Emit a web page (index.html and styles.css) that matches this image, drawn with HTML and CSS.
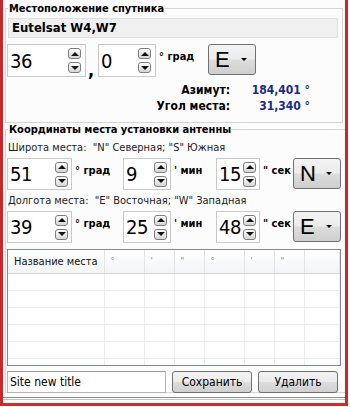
FILE: index.html
```html
<!DOCTYPE html>
<html>
<head>
    <meta charset="UTF-8">
    <title>Местоположение спутника</title>
    <link rel="stylesheet" href="styles.css">
</head>
<body>
<div class="window">
    <fieldset class="group sat">
        <legend>Местоположение спутника</legend>
        <div class="satname">Eutelsat W4,W7</div>
        <div class="row satrow">
            <div class="spin w78"><span class="val">36</span><div class="arrows"><span class="ab up"></span><span class="ab dn"></span></div></div>
            <span class="comma">,</span>
            <div class="spin w58"><span class="val">0</span><div class="arrows"><span class="ab up"></span><span class="ab dn"></span></div></div>
            <span class="unit u-grad1">° град</span>
            <div class="combo c-sat"><span class="cval">E</span><span class="caret"></span></div>
        </div>
        <div class="results">
            <span class="rlabel">Азимут:</span><span class="rval">184,401 °</span>
            <span class="rlabel">Угол места:</span><span class="rval">31,340 °</span>
        </div>
    </fieldset>

    <fieldset class="group site">
        <legend>Координаты места установки антенны</legend>
        <div class="hint">Широта места:&nbsp; "N" Северная; "S" Южная</div>
        <div class="row">
            <div class="spin w64"><span class="val">51</span><div class="arrows"><span class="ab up"></span><span class="ab dn"></span></div></div>
            <span class="unit u-grad">° град</span>
            <div class="spin w48"><span class="val">9</span><div class="arrows"><span class="ab up"></span><span class="ab dn"></span></div></div>
            <span class="unit u-min">' мин</span>
            <div class="spin w40"><span class="val">15</span><div class="arrows"><span class="ab up"></span><span class="ab dn"></span></div></div>
            <span class="unit u-sec">" сек</span>
            <div class="combo c-site"><span class="cval">N</span><span class="caret"></span></div>
        </div>
        <div class="hint">Долгота места:&nbsp; "E" Восточная; "W" Западная</div>
        <div class="row">
            <div class="spin w64"><span class="val">39</span><div class="arrows"><span class="ab up"></span><span class="ab dn"></span></div></div>
            <span class="unit u-grad">° град</span>
            <div class="spin w48"><span class="val">25</span><div class="arrows"><span class="ab up"></span><span class="ab dn"></span></div></div>
            <span class="unit u-min">' мин</span>
            <div class="spin w40"><span class="val">48</span><div class="arrows"><span class="ab up"></span><span class="ab dn"></span></div></div>
            <span class="unit u-sec">" сек</span>
            <div class="combo c-site"><span class="cval">E</span><span class="caret"></span></div>
        </div>

        <div class="listwrap">
            <table class="list">
                <tr class="head">
                    <th class="cname">Название места</th>
                    <th class="c40">°</th><th class="c30">'</th><th class="c30">"</th>
                    <th class="c40">°</th><th class="c30">'</th><th class="c30">"</th>
                    <th></th>
                </tr>
                <tr><td></td><td></td><td></td><td></td><td></td><td></td><td></td><td></td></tr>
                <tr><td></td><td></td><td></td><td></td><td></td><td></td><td></td><td></td></tr>
                <tr><td></td><td></td><td></td><td></td><td></td><td></td><td></td><td></td></tr>
                <tr><td></td><td></td><td></td><td></td><td></td><td></td><td></td><td></td></tr>
                <tr><td></td><td></td><td></td><td></td><td></td><td></td><td></td><td></td></tr>
                <tr><td></td><td></td><td></td><td></td><td></td><td></td><td></td><td></td></tr>
            </table>
        </div>

        <div class="bottom">
            <div class="edit">Site new title</div>
            <div class="btn">Сохранить</div>
            <div class="btn">Удалить</div>
        </div>
    </fieldset>
    <div class="statusline"></div>
</div>
</body>
</html>
```

FILE: styles.css
```css
* {
    margin: 0;
    padding: 0;
    box-sizing: border-box;
}

body {
    background: #fff;
    font-family: "DejaVu Sans Condensed", "DejaVu Sans", sans-serif;
    font-size: 11px;
    color: #000;
}

.window {
    width: 348px;
    height: 406px;
    background: #fcfcfc;
    border-left: 3px solid #c8282b;
    border-right: 3px solid #c8282b;
    border-bottom: 3px solid #d42a2a;
    overflow: hidden;
}

.group {
    border: 1px solid #d5d5d5;
    margin: 0 2px;
    padding: 0 4px 0 2px;
}

.group legend {
    font-weight: bold;
    line-height: 13px;
    padding: 0 1px;
}

.sat {
    margin-top: 2px;
    padding-bottom: 9px;
}

.satname {
    margin-top: 3px;
    height: 20px;
    line-height: 18px;
    padding-left: 3px;
    background: #f0f0f0;
    border: 1px solid #dedede;
    font-size: 13px;
    font-weight: bold;
}

.row {
    display: flex;
    align-items: flex-start;
    margin-top: 3px;
}

.satrow {
    margin-top: 6px;
}

/* spin box */
.spin {
    display: flex;
    align-items: center;
    justify-content: space-between;
    height: 32px;
    background: #fff;
    border: 1px solid #c9c9c9;
    padding: 0 3px 0 2px;
}

.satrow .spin {
    height: 33px;
    padding-right: 4px;
}

.w78 { width: 79px; margin-left: -1px; }
.w58 { width: 58px; }
.w64 { width: 65px; margin-left: -1px; }
.w48 { width: 48px; }
.w40 { width: 44px; }

.val {
    font-size: 20px;
    line-height: 24px;
    letter-spacing: -0.5px;
}

.arrows {
    display: flex;
    flex-direction: column;
    gap: 3px;
}

.ab {
    display: flex;
    align-items: center;
    justify-content: center;
    width: 13px;
    height: 11px;
    border: 1px solid #7e7e7e;
    border-radius: 3px;
    background: linear-gradient(#fdfdfd, #d6d6d6);
}

.ab::after {
    content: "";
    border-left: 4px solid transparent;
    border-right: 4px solid transparent;
}

.up::after {
    border-bottom: 4px solid #111;
}

.dn::after {
    border-top: 4px solid #111;
}

.comma {
    width: 12px;
    padding-left: 2px;
    font-size: 18px;
    font-weight: bold;
    line-height: 20px;
    margin-top: 16px;
}

.unit {
    font-weight: bold;
    line-height: 13px;
    margin-top: 6px;
    white-space: nowrap;
}

.u-grad1 { width: 52px; padding-left: 3px; }
.u-grad { width: 51px; padding-left: 3px; }
.u-min { width: 45px; padding-left: 3px; }
.u-sec { width: 33px; padding-left: 3px; }

/* combo */
.combo {
    display: flex;
    align-items: center;
    justify-content: space-between;
    border: 1px solid #707070;
    border-radius: 3px;
    background: linear-gradient(#f3f3f3 0%, #ebebeb 48%, #dcdcdc 52%, #cfcfcf 100%);
    padding: 0 8px 0 6px;
}

.c-sat {
    width: 48px;
    height: 31px;
}

.c-site {
    width: 48px;
    height: 31px;
}

.cval {
    font-family: "Liberation Sans", Arial, sans-serif;
    font-size: 22px;
    line-height: 24px;
}

.caret {
    border-left: 3px solid transparent;
    border-right: 3px solid transparent;
    border-top: 3px solid #000;
}

/* results */
.results {
    display: grid;
    grid-template-columns: 222px 80px;
    margin-top: 4px;
    row-gap: 3px;
    font-weight: bold;
    font-size: 12px;
    line-height: 13px;
}

.rlabel {
    text-align: right;
}

.rval {
    text-align: right;
    color: #1c2b86;
}

/* site group */
.site {
    padding-bottom: 2px;
    height: 270px;
}

.hint {
    margin-top: 4px;
    line-height: 14px;
    color: #222;
}

.site legend + .hint {
    margin-top: 5px;
}

.listwrap {
    margin-top: 6px;
    margin-left: -1px;
    height: 117px;
    border: 1px solid #828790;
    background: #fff;
    overflow: hidden;
}

.list {
    width: 100%;
    border-collapse: collapse;
    table-layout: fixed;
}

.list th {
    height: 23px;
    text-align: left;
    font-weight: normal;
    color: #8a8a8a;
    font-size: 9px;
    vertical-align: top;
    padding: 6px 0 0 6px;
    background: linear-gradient(#ffffff, #f3f4f6);
    border-right: 1px solid #e3e4e6;
    border-bottom: 1px solid #d5d5d5;
}

.list th.cname {
    width: 96px;
    font-size: 11px;
    color: #111;
    padding-top: 5px;
}

.list th.c40 { width: 40px; }
.list th.c30 { width: 30px; }

.list td {
    height: 17px;
    border-right: 1px solid #ececec;
    border-bottom: 1px solid #ececec;
}

.bottom {
    display: flex;
    gap: 6px;
    margin-top: 5px;
    margin-left: -1px;
    height: 22px;
}

.edit {
    width: 159px;
    background: #fff;
    border: 1px solid #b5b5b5;
    border-top-color: #9a9a9a;
    padding-left: 2px;
    line-height: 20px;
    font-size: 12px;
}

.btn {
    width: 80px;
    text-align: center;
    line-height: 20px;
    font-size: 12px;
    border: 1px solid #707070;
    border-radius: 3px;
    background: linear-gradient(#f3f3f3 0%, #ebebeb 48%, #dddddd 52%, #cfcfcf 100%);
}

.statusline {
    margin-top: 4px;
    height: 3px;
    border-top: 1px solid #8e8e8e;
    border-bottom: 1px solid #c4c4c4;
}
```
